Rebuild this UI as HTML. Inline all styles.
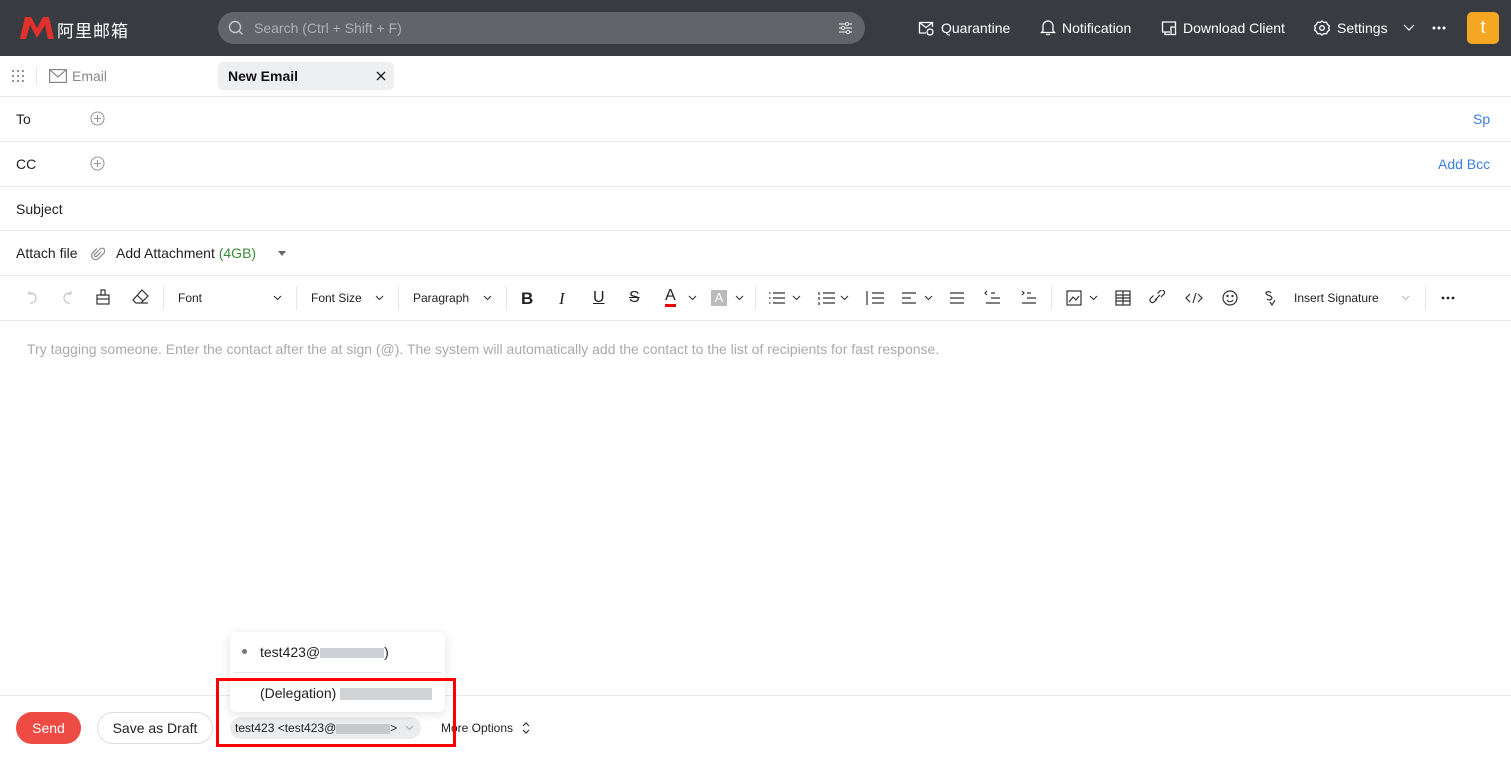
<!DOCTYPE html>
<html><head><meta charset="utf-8"><style>
*{margin:0;padding:0;box-sizing:border-box}
body{width:1511px;height:760px;overflow:hidden;background:#fff;font-family:"Liberation Sans","Noto Sans CJK SC",sans-serif;position:relative;color:#222}
.a{position:absolute}
.hdr{left:0;top:0;width:1511px;height:56px;background:#383c41}
.ht{color:#fff;font-size:14px;top:20px}
.row{left:0;width:1511px;border-bottom:1px solid #e8e8e8;font-size:14px}
.lbl{left:16px;font-size:14px;color:#222}
.tb{top:291px;font-size:12px;color:#222}
svg{position:absolute}
.sep{position:absolute;top:286px;width:1px;height:24px;background:#e5e5e5}
.dd{position:absolute;width:9px;height:6px}
</style></head><body>
<div class="a hdr"></div>
<svg style="left:20px;top:16px" width="34" height="24" viewBox="0 0 34 24"><path d="M0 23 L5 1 L11 1 L17 12 L23 1 L29 1 L34 23 L28 23 L25 9 L17 22 L10 9 L6 23Z" fill="#e0312c"/></svg>
<div class="a" style="left:57px;top:17px;color:#fff;font-size:17px;letter-spacing:1px">阿里邮箱</div>
<div class="a" style="left:218px;top:12px;width:647px;height:32px;border-radius:16px;background:#616468"></div>
<svg style="left:228px;top:20px" width="16" height="16" viewBox="0 0 16 16"><circle cx="7" cy="7" r="5.5" fill="none" stroke="#c8c8c8" stroke-width="1.4"/><path d="M11 11l3.5 3.5" stroke="#c8c8c8" stroke-width="1.4"/></svg>
<div class="a" style="left:254px;top:20px;color:#aeb0b3;font-size:14px">Search (Ctrl + Shift + F)</div>
<svg style="left:838px;top:21px" width="15" height="14" viewBox="0 0 15 14"><path d="M1 3h13M1 7h13M1 11h13" stroke="#ddd" stroke-width="1.2"/><circle cx="9" cy="3" r="1.6" fill="#616468" stroke="#ddd"/><circle cx="5" cy="7" r="1.6" fill="#616468" stroke="#ddd"/><circle cx="10" cy="11" r="1.6" fill="#616468" stroke="#ddd"/></svg>
<svg style="left:918px;top:20px" width="16" height="16" viewBox="0 0 16 16" fill="none" stroke="#fff" stroke-width="1.3"><path d="M8 13H1.5V2.5h13V7M1.5 2.5l6.5 5 6.5-5"/><circle cx="12" cy="12" r="3"/></svg>
<div class="a ht" style="left:941px">Quarantine</div>
<svg style="left:1040px;top:19px" width="16" height="17" viewBox="0 0 16 17" fill="none" stroke="#fff" stroke-width="1.3"><path d="M3 12V7a5 5 0 0110 0v5l1.5 1.5h-13z M6 15.5h4"/></svg>
<div class="a ht" style="left:1062px">Notification</div>
<svg style="left:1161px;top:20px" width="16" height="16" viewBox="0 0 16 16" fill="none" stroke="#fff" stroke-width="1.3"><path d="M9 12H1.5V2h13v4M4 12v2.5h5"/><rect x="10" y="7" width="4.5" height="7.5"/></svg>
<div class="a ht" style="left:1183px">Download Client</div>
<svg style="left:1314px;top:20px" width="16" height="16" viewBox="0 0 16 16" fill="none" stroke="#fff" stroke-width="1.3"><circle cx="8" cy="8" r="2.3"/><path d="M8 1l2 1.5 2.5-.3 1 2.3 2 1.5-1 2 1 2-2 1.5-1 2.3-2.5-.3L8 15l-2-1.5-2.5.3-1-2.3-2-1.5 1-2-1-2 2-1.5 1-2.3 2.5.3z"/></svg>
<div class="a ht" style="left:1337px">Settings</div>
<svg style="left:1403px;top:24px" width="12" height="8" viewBox="0 0 12 8"><path d="M1 1l5 5 5-5" fill="none" stroke="#fff" stroke-width="1.2"/></svg>
<svg style="left:1432px;top:26px" width="14" height="4" viewBox="0 0 14 4" fill="#fff"><circle cx="2" cy="2" r="1.5"/><circle cx="7" cy="2" r="1.5"/><circle cx="12" cy="2" r="1.5"/></svg>
<div class="a" style="left:1467px;top:12px;width:32px;height:32px;border-radius:5px;background:#f5a623;color:#fff;font-size:18px;text-align:center;line-height:31px">t</div>

<div class="a row" style="top:56px;height:41px"></div>
<svg style="left:11px;top:69px" width="14" height="14" viewBox="0 0 14 14" fill="#888"><circle cx="2" cy="2" r="1.1"/><circle cx="7" cy="2" r="1.1"/><circle cx="12" cy="2" r="1.1"/><circle cx="2" cy="7" r="1.1"/><circle cx="7" cy="7" r="1.1"/><circle cx="12" cy="7" r="1.1"/><circle cx="2" cy="12" r="1.1"/><circle cx="7" cy="12" r="1.1"/><circle cx="12" cy="12" r="1.1"/></svg>
<div class="a" style="left:36px;top:67px;width:1px;height:18px;background:#e5e5e5"></div>
<svg style="left:49px;top:69px" width="18" height="14" viewBox="0 0 18 14" fill="none" stroke="#888" stroke-width="1.2"><rect x=".6" y=".6" width="16.8" height="12.8"/><path d="M.6 .6L9 8l8.4-7.4"/></svg>
<div class="a" style="left:72px;top:68px;color:#888;font-size:14px">Email</div>
<div class="a" style="left:218px;top:62px;width:176px;height:28px;background:#eeeff1;border-radius:5px"></div>
<div class="a" style="left:228px;top:68px;font-size:14px;font-weight:bold;color:#111">New Email</div>
<svg style="left:376px;top:71px" width="10" height="10" viewBox="0 0 10 10"><path d="M1 1l8 8M9 1l-8 8" stroke="#222" stroke-width="1.4"/></svg>

<div class="a row" style="top:97px;height:45px"></div>
<div class="a lbl" style="top:111px">To</div>
<svg style="left:90px;top:111px" width="15" height="15" viewBox="0 0 15 15" fill="none" stroke="#999" stroke-width="1.1"><circle cx="7.5" cy="7.5" r="6.5"/><path d="M7.5 4v7M4 7.5h7"/></svg>
<div class="a" style="left:1473px;top:111px;color:#3b7de0;font-size:14px">Sp</div>
<div class="a row" style="top:142px;height:45px"></div>
<div class="a lbl" style="top:156px">CC</div>
<svg style="left:90px;top:156px" width="15" height="15" viewBox="0 0 15 15" fill="none" stroke="#999" stroke-width="1.1"><circle cx="7.5" cy="7.5" r="6.5"/><path d="M7.5 4v7M4 7.5h7"/></svg>
<div class="a" style="left:1438px;top:156px;color:#3b7de0;font-size:14px">Add Bcc</div>
<div class="a row" style="top:187px;height:44px"></div>
<div class="a lbl" style="top:201px">Subject</div>
<div class="a row" style="top:231px;height:45px"></div>
<div class="a lbl" style="top:245px">Attach file</div>
<svg style="left:91px;top:246px" width="14" height="15" viewBox="0 0 14 15" fill="none" stroke="#888" stroke-width="1.2"><path d="M10 6l-4.5 4.5a1.5 1.5 0 01-2-2L9 3a2.8 2.8 0 014 4l-5.5 5.5a4 4 0 01-5.7-5.7L6 2.5"/></svg>
<div class="a" style="left:116px;top:245px;font-size:14px">Add Attachment <span style="color:#3a8a3a">(4GB)</span></div>
<svg style="left:277px;top:251px" width="10" height="6" viewBox="0 0 10 6"><path d="M1 0h8L5 5z" fill="#666"/></svg>

<div class="a row" style="top:276px;height:45px"></div>
<svg style="left:25px;top:290px" width="50" height="16" viewBox="0 0 50 16" fill="none" stroke="#c8c8c8" stroke-width="1.3"><path d="M4 3.5A5 5 0 1 1 5 13M4 1v3h3"/><path d="M46 3.5A5 5 0 1 0 45 13M46 1v3h-3"/></svg>
<svg style="left:96px;top:289px" width="14" height="16" viewBox="0 0 14 16" fill="none" stroke="#333" stroke-width="1.2"><rect x="5" y="1" width="4" height="5"/><rect x="1" y="6" width="12" height="9"/><path d="M1 10h12"/></svg>
<svg style="left:132px;top:289px" width="17" height="16" viewBox="0 0 17 16" fill="none" stroke="#333" stroke-width="1.2"><path d="M10 1l6 6-7 7H4l-3-3z M5 6l6 6 M4 14h12"/></svg>
<div class="sep" style="left:163px"></div>
<div class="a tb" style="left:178px">Font</div>
<svg class="dd" style="left:273px;top:295px" viewBox="0 0 9 6"><path d="M1 1l3.5 3.5L8 1" fill="none" stroke="#333" stroke-width="1.1"/></svg>
<div class="sep" style="left:296px"></div>
<div class="a tb" style="left:311px">Font Size</div>
<svg class="dd" style="left:375px;top:295px" viewBox="0 0 9 6"><path d="M1 1l3.5 3.5L8 1" fill="none" stroke="#333" stroke-width="1.1"/></svg>
<div class="sep" style="left:398px"></div>
<div class="a tb" style="left:413px">Paragraph</div>
<svg class="dd" style="left:483px;top:295px" viewBox="0 0 9 6"><path d="M1 1l3.5 3.5L8 1" fill="none" stroke="#333" stroke-width="1.1"/></svg>
<div class="sep" style="left:506px"></div>
<div class="a" style="left:521px;top:289px;font-size:17px;font-weight:bold;color:#222">B</div>
<div class="a" style="left:559px;top:289px;font-size:17px;font-style:italic;font-family:'Liberation Serif';color:#222">I</div>
<div class="a" style="left:593px;top:289px;font-size:16px;text-decoration:underline;color:#222">U</div>
<div class="a" style="left:629px;top:289px;font-size:16px;text-decoration:line-through;color:#222">S</div>
<div class="a" style="left:665px;top:288px;font-size:16px;color:#222;border-bottom:3px solid #e00;line-height:16px">A</div>
<svg class="dd" style="left:688px;top:295px" viewBox="0 0 9 6"><path d="M1 1l3.5 3.5L8 1" fill="none" stroke="#333" stroke-width="1.1"/></svg>
<div class="a" style="left:711px;top:290px;width:16px;height:16px;background:#bbb;color:#fff;font-size:13px;text-align:center;line-height:16px">A</div>
<svg class="dd" style="left:735px;top:295px" viewBox="0 0 9 6"><path d="M1 1l3.5 3.5L8 1" fill="none" stroke="#333" stroke-width="1.1"/></svg>
<div class="sep" style="left:755px"></div>
<svg style="left:768px;top:290px" width="120" height="16" viewBox="0 0 120 16" fill="none" stroke="#333" stroke-width="1.2"><path d="M5 3h12M5 8h12M5 13h12M1 3h1.5M1 8h1.5M1 13h1.5"/><path d="M55 3h12M55 8h12M55 13h12M51 2v3M51 7v3M51 12v3"/><path d="M104 3h12M104 8h12M104 13h12M99 1v14"/></svg>
<svg class="dd" style="left:792px;top:295px" viewBox="0 0 9 6"><path d="M1 1l3.5 3.5L8 1" fill="none" stroke="#333" stroke-width="1.1"/></svg>
<svg class="dd" style="left:840px;top:295px" viewBox="0 0 9 6"><path d="M1 1l3.5 3.5L8 1" fill="none" stroke="#333" stroke-width="1.1"/></svg>
<svg style="left:901px;top:290px" width="140" height="16" viewBox="0 0 140 16" fill="none" stroke="#333" stroke-width="1.2"><path d="M1 3h14M1 8h9M1 13h14"/><path d="M49 3h14M49 8h14M49 13h14"/><path d="M90 3h4M90 8h9M85 13h14M86 1l-2 2 2 2"/><path d="M126 3h4M126 8h9M121 13h14M121 1l2 2-2 2"/></svg>
<svg class="dd" style="left:924px;top:295px" viewBox="0 0 9 6"><path d="M1 1l3.5 3.5L8 1" fill="none" stroke="#333" stroke-width="1.1"/></svg>
<div class="sep" style="left:1051px"></div>
<svg style="left:1066px;top:290px" width="220" height="16" viewBox="0 0 220 16" fill="none" stroke="#333" stroke-width="1.2"><rect x="1" y="1" width="14" height="14"/><path d="M3 12l4-5 3 3 3-4"/><rect x="50" y="1" width="14" height="14"/><path d="M50 8h14M57 1v14M50 5h14M50 11h14"/><path d="M91 9l-3 3a2.5 2.5 0 01-3.5-3.5l3-3M95 7l3-3a2.5 2.5 0 00-3.5-3.5l-3 3M89 10l5-5"/><path d="M124 4l-4 4 4 4M132 4l4 4-4 4M130 3l-3 10"/><circle cx="164" cy="8" r="7"/><circle cx="161.5" cy="6" r=".6" fill="#333"/><circle cx="166.5" cy="6" r=".6" fill="#333"/><path d="M161 10a3.5 3.5 0 006 0"/><path d="M205 3a3 3 0 00-5 0c0 3 6 2 6 5a3 3 0 01-5 1M204 12l2 3 3-5"/></svg>
<svg class="dd" style="left:1089px;top:295px" viewBox="0 0 9 6"><path d="M1 1l3.5 3.5L8 1" fill="none" stroke="#333" stroke-width="1.1"/></svg>
<div class="a tb" style="left:1294px">Insert Signature</div>
<svg class="dd" style="left:1401px;top:295px" viewBox="0 0 9 6"><path d="M1 1l3.5 3.5L8 1" fill="none" stroke="#bbb" stroke-width="1.1"/></svg>
<div class="sep" style="left:1425px"></div>
<svg style="left:1441px;top:296px" width="14" height="4" viewBox="0 0 14 4" fill="#222"><circle cx="2" cy="2" r="1.4"/><circle cx="7" cy="2" r="1.4"/><circle cx="12" cy="2" r="1.4"/></svg>

<div class="a" style="left:27px;top:341px;color:#aaa;font-size:14px">Try tagging someone. Enter the contact after the at sign (@). The system will automatically add the contact to the list of recipients for fast response.</div>

<div class="a" style="left:0;top:695px;width:1511px;height:1px;background:#e8e8e8"></div>
<div class="a" style="left:16px;top:712px;width:65px;height:32px;border-radius:16px;background:#ef4b45;color:#fff;font-size:14px;text-align:center;line-height:32px">Send</div>
<div class="a" style="left:97px;top:712px;width:116px;height:32px;border-radius:16px;border:1px solid #ddd;font-size:14px;text-align:center;line-height:30px">Save as Draft</div>
<div class="a" style="left:230px;top:717px;width:191px;height:22px;border-radius:11px;background:#ebecee;font-size:12px;line-height:22px;padding-left:5px">test423 &lt;test423@<span style="display:inline-block;width:54px;height:10px;background:#c8c9cc;vertical-align:middle"></span>&gt;</div>
<svg class="dd" style="left:405px;top:725px" viewBox="0 0 9 6"><path d="M1 1l3.5 3.5L8 1" fill="none" stroke="#aaa" stroke-width="1.1"/></svg>
<div class="a" style="left:441px;top:721px;font-size:12px">More Options</div>
<svg style="left:522px;top:722px" width="8" height="12" viewBox="0 0 8 12" fill="none" stroke="#333" stroke-width="1.2"><path d="M1 4l3-3 3 3M1 8l3 3 3-3"/></svg>
<div class="a" style="left:230px;top:632px;width:215px;height:80px;background:#fff;border-radius:6px;box-shadow:0 2px 10px rgba(0,0,0,.12)"></div>
<div class="a" style="left:242px;top:649px;width:5px;height:5px;border-radius:50%;background:#777"></div>
<div class="a" style="left:260px;top:644px;font-size:14px">test423@<span style="display:inline-block;width:64px;height:10px;background:#cdd0d4;vertical-align:middle"></span>)</div>
<div class="a" style="left:234px;top:672px;width:208px;height:1px;background:#e5e5e5"></div>
<div class="a" style="left:260px;top:685px;font-size:14px">(Delegation) <span style="display:inline-block;width:92px;height:12px;background:#d2d3d6;vertical-align:middle"></span></div>
<div class="a" style="left:216px;top:678px;width:240px;height:69px;border:3px solid #f00"></div>
</body></html>
